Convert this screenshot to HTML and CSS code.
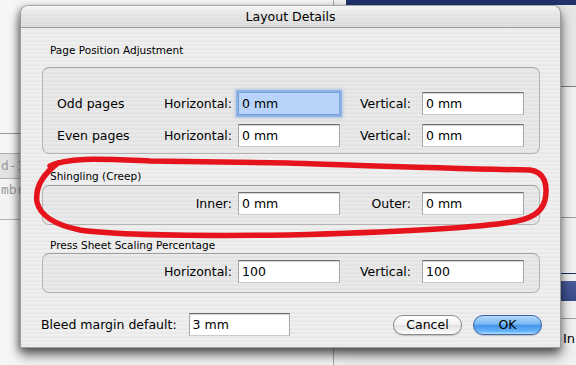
FILE: index.html
```html
<!DOCTYPE html>
<html lang="en">
<head>
  <meta charset="UTF-8">
  <title>Layout Details</title>
  <link rel="stylesheet" href="styles.css">
</head>
<body>

<!-- windows behind the sheet -->
<div class="win-left">
  <div class="wl-top"></div>
  <div class="wl-row">d-1</div>
  <div class="wl-row wl-light">mbr</div>
</div>

<div class="win-right">
  <div class="wr-title"></div>
  <div class="wr-pane wr-a"></div>
  <div class="wr-pane wr-b"></div>
  <div class="wr-pane wr-c"></div>
  <div class="wr-band"></div>
  <div class="wr-pane wr-d"></div>
  <div class="wr-text">In</div>
</div>

<div class="dialog">
  <div class="titlebar">Layout Details</div>

  <div class="content">
    <div class="group-label gl-pos">Page Position Adjustment</div>
    <div class="group group-pos">
      <div class="grid">
        <span class="name">Odd pages</span>
        <span class="lbl">Horizontal:</span>
        <div class="field focus">0 mm</div>
        <span class="lbl lbl-2">Vertical:</span>
        <div class="field">0 mm</div>

        <span class="name">Even pages</span>
        <span class="lbl">Horizontal:</span>
        <div class="field">0 mm</div>
        <span class="lbl lbl-2">Vertical:</span>
        <div class="field">0 mm</div>
      </div>
    </div>

    <div class="group-label gl-creep">Shingling (Creep)</div>
    <div class="group group-small">
      <div class="grid">
        <span class="name"></span>
        <span class="lbl">Inner:</span>
        <div class="field">0 mm</div>
        <span class="lbl lbl-2">Outer:</span>
        <div class="field">0 mm</div>
      </div>
    </div>

    <div class="group-label gl-scale">Press Sheet Scaling Percentage</div>
    <div class="group group-small">
      <div class="grid">
        <span class="name"></span>
        <span class="lbl">Horizontal:</span>
        <div class="field">100</div>
        <span class="lbl lbl-2">Vertical:</span>
        <div class="field">100</div>
      </div>
    </div>

    <div class="footer">
      <span class="bleed-lbl">Bleed margin default:</span>
      <div class="field bleed">3 mm</div>
      <div class="spacer"></div>
      <button class="btn">Cancel</button>
      <button class="btn btn-ok">OK</button>
    </div>
  </div>
</div>

<!-- hand drawn marker loop -->
<svg class="scribble" width="576" height="365" viewBox="0 0 576 365">
  <path d="M 50 166 C 68 157, 100 159, 150 161 L 288 163 C 380 166, 460 169, 530 170 C 545 172, 548 185, 545 200 C 542 212, 532 220, 505 223 C 470 228, 400 232, 288 235 C 200 236, 120 236, 80 230 C 55 225, 40 215, 37 202 C 35 188, 42 175, 58 163"
        fill="none" stroke="#e5141c" stroke-width="5.5" stroke-linecap="round" stroke-linejoin="round"/>
</svg>

</body>
</html>
```

FILE: styles.css
```css
body {
  margin: 0;
  width: 576px;
  height: 365px;
  overflow: hidden;
  position: relative;
  background: #f2f2f2;
  font-family: "DejaVu Sans", Verdana, sans-serif;
  color: #000;
}

/* background windows */
.win-left {
  position: absolute;
  left: 0;
  top: 0;
  width: 333px;
  height: 365px;
  background: #f6f6f6;
  border-right: 1px solid #a8a8a8;
}
.wl-top {
  height: 133px;
  border-bottom: 1px solid #9a9a9a;
  margin-bottom: 19px;
}
.wl-row {
  height: 24px;
  line-height: 24px;
  padding-left: 1px;
  font-family: "DejaVu Sans Mono", monospace;
  font-size: 13px;
  color: #9a9a9a;
  background: #e2e2e2;
  border-top: 1px solid #b0b0b0;
  border-bottom: 1px solid #b0b0b0;
}
.wl-light {
  background: #f3f3f3;
  border-top: none;
  height: 40px;
  line-height: 22px;
}
.win-right {
  position: absolute;
  left: 346px;
  top: 0;
  width: 230px;
  height: 365px;
  background: #f0f0f0;
  display: flex;
  flex-direction: column;
}
.wr-title {
  height: 5px;
  background: #22336c;
}
.wr-pane {
  border-bottom: 1px solid #7e7e7e;
}
.wr-a { height: 81px; background: #e6e6e6; }
.wr-b { height: 130px; background: #f1f1f1; border-bottom-color: #9a9a9a; }
.wr-c { height: 55px; background: #f1f1f1; border-bottom: 1px solid #1f2d6a; }
.wr-band {
  height: 20px;
  margin-top: 7px;
  background: linear-gradient(#4a5c98, #37498a);
}
.wr-d { height: 17px; background: #f1f1f1; border-bottom-color: #a0a0a0; }
.wr-text {
  padding: 12px 0 0 217px;
  font-size: 13px;
}

/* the sheet */
.dialog {
  position: absolute;
  left: 20px;
  top: 5px;
  width: 539px;
  height: 341px;
  border: 1px solid #9c9c9c;
  border-top-color: #a8a8a8;
  border-radius: 8px 8px 0 0;
  background: repeating-linear-gradient(#efefef 0, #efefef 2px, #e9e9e9 2px, #e9e9e9 4px);
  box-shadow: 0 7px 12px rgba(0, 0, 0, 0.6), -2px 2px 6px rgba(0, 0, 0, 0.25);
  display: flex;
  flex-direction: column;
}
.titlebar {
  height: 21px;
  line-height: 21px;
  text-align: center;
  font-size: 12.5px;
  border-bottom: 1px solid #9a9a9a;
  border-radius: 8px 8px 0 0;
  background:
    repeating-linear-gradient(rgba(255,255,255,0.25) 0, rgba(255,255,255,0.25) 1px, transparent 1px, transparent 2px),
    linear-gradient(#f4f4f4, #e2e2e2 40%, #d8d8d8);
}
.content {
  padding: 16px 20px 0 21px;
  display: flex;
  flex-direction: column;
}

.group-label {
  font-size: 10.5px;
  line-height: 13px;
  padding-left: 8px;
}
.gl-pos { margin-bottom: 10px; }
.gl-creep { margin-top: 16px; margin-bottom: 2px; }
.gl-scale { margin-top: 14px; margin-bottom: 1px; }

.group {
  border: 1px solid #b4b4b4;
  border-top-color: #a0a0a0;
  border-radius: 7px;
  background: rgba(0, 0, 0, 0.025);
  padding: 0 15px 0 14px;
}
.group-pos { padding-top: 24px; padding-bottom: 6px; }
.group-small { padding-top: 6px; padding-bottom: 9px; }

.grid {
  display: grid;
  grid-template-columns: 100px 81px 102px 82px 102px;
  grid-auto-rows: 23px;
  row-gap: 9px;
  align-items: center;
  font-size: 12.5px;
}
.lbl {
  text-align: right;
  padding-right: 6px;
}
.lbl-2 { padding-right: 11px; }

.field {
  box-sizing: border-box;
  height: 23px;
  line-height: 21px;
  padding-left: 3px;
  font-size: 12.5px;
  background: #fff;
  border: 1px solid #a8a8a8;
  border-top-color: #6f6f6f;
  border-bottom-color: #cacaca;
  box-shadow: inset 0 1px 1px rgba(0, 0, 0, 0.18);
}
.field.focus {
  background: #b8d4fa;
  border-color: #7c9fd6;
  box-shadow: 0 0 0 2px #8fb2e6, 0 0 3px 3px rgba(120, 160, 225, 0.45);
}

.footer {
  display: flex;
  align-items: center;
  margin-top: 20px;
  margin-left: -1px;
  margin-right: -2px;
  font-size: 12.5px;
}
.field.bleed {
  width: 101px;
  margin-left: 12px;
}
.spacer { flex: 1; }
.btn {
  width: 69px;
  height: 20px;
  padding: 0;
  font-family: "DejaVu Sans", Verdana, sans-serif;
  font-size: 12.5px;
  color: #000;
  border: 1px solid #8a8a8a;
  border-radius: 10px;
  background: linear-gradient(#ffffff, #f2f2f2 48%, #e2e2e2 52%, #f4f4f4 85%, #ffffff);
  box-shadow: 0 1px 1px rgba(0, 0, 0, 0.2);
}
.btn-ok {
  margin-left: 11px;
  border-color: #3c63a6;
  background: linear-gradient(#b5dafc, #78b8f4 45%, #4595ea 52%, #66b2f8 85%, #b4e2ff);
}

.scribble {
  position: absolute;
  left: 0;
  top: 0;
  pointer-events: none;
}
```
